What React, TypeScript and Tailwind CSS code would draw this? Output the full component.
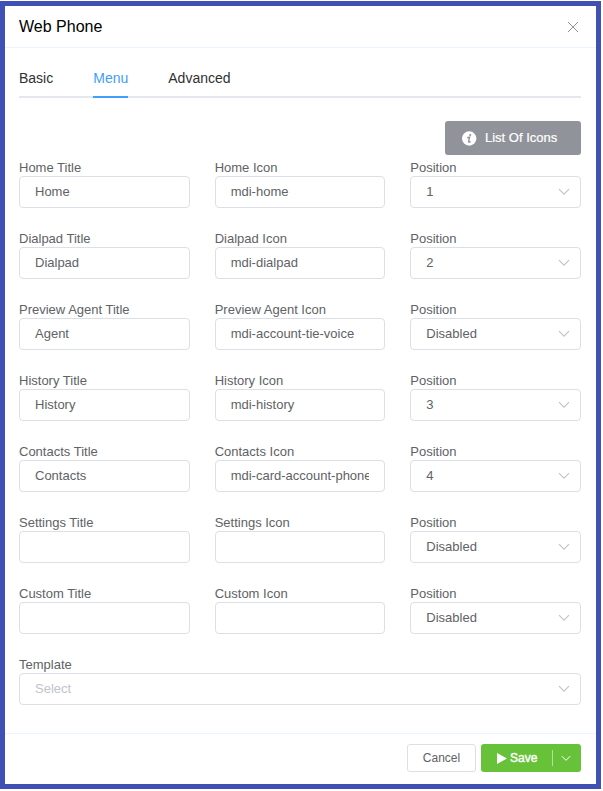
import React from "react";

const rows = [
  { name: "Home", title: "Home", icon: "mdi-home", position: "1" },
  { name: "Dialpad", title: "Dialpad", icon: "mdi-dialpad", position: "2" },
  { name: "Preview Agent", title: "Agent", icon: "mdi-account-tie-voice", position: "Disabled" },
  { name: "History", title: "History", icon: "mdi-history", position: "3" },
  { name: "Contacts", title: "Contacts", icon: "mdi-card-account-phone", position: "4" },
  { name: "Settings", title: "", icon: "", position: "Disabled" },
  { name: "Custom", title: "", icon: "", position: "Disabled" },
];

function Chevron({ className }: { className: string }) {
  return (
    <svg className={className} viewBox="0 0 12 8" fill="none" stroke="currentColor" strokeWidth="1.2">
      <path d="M1 1.2 6 6.2 11 1.2" />
    </svg>
  );
}

function Field({ label, value }: { label: string; value: string }) {
  return (
    <label className="block min-w-0">
      <span className="block h-[17px] leading-[17px] whitespace-nowrap">{label}</span>
      <input
        className="block h-8 w-full rounded border border-[#dcdfe6] bg-white px-[15px] pb-0.5 outline-none"
        defaultValue={value}
      />
    </label>
  );
}

function Select({ label, value, muted = false }: { label: string; value: string; muted?: boolean }) {
  return (
    <div className="min-w-0">
      <div className="h-[17px] leading-[17px]">{label}</div>
      <div className="flex h-8 items-center justify-between rounded border border-[#dcdfe6] pr-2.5 pl-[15px]">
        <span className={muted ? "text-[#c0c4cc]" : ""}>{value}</span>
        <Chevron className="h-2 w-3 text-[#c0c4cc]" />
      </div>
    </div>
  );
}

export default function App() {
  return (
    <div className="h-[791px] w-[603px] bg-white pt-px font-['Liberation_Sans',Arial,sans-serif] text-[13px] text-[#606266]">
      <div className="flex h-[788px] w-[601px] flex-col border-5 border-[#3f51b5] bg-white">
        <header className="flex h-[42px] shrink-0 items-center justify-between border-b border-[#ecf5ff] pr-[17px] pl-3.5">
          <h1 className="text-[16px] text-black">Web Phone</h1>
          <svg width="12" height="12" viewBox="0 0 12 12" stroke="#909399" strokeWidth="1">
            <path d="M1 1 11 11M11 1 1 11" />
          </svg>
        </header>

        <main className="flex h-[685px] shrink-0 flex-col pt-[17px] pr-[15px] pb-7 pl-3.5">
          <nav className="flex h-[33px] shrink-0 gap-10 border-b-2 border-[#e4e7ed] text-sm leading-[26px] text-[#303133]">
            <span>Basic</span>
            <span className="h-[33px] border-b-2 border-[#409eff] text-[#409eff]">Menu</span>
            <span>Advanced</span>
          </nav>

          <button className="mt-[23px] flex h-[34px] w-[136px] shrink-0 items-center gap-2 self-end rounded-[3px] bg-[#909399] pl-[17px] text-white">
            <svg width="15" height="15" viewBox="0 0 15 15">
              <circle cx="7.2" cy="7.5" r="7.2" fill="white" />
              <circle cx="8.2" cy="4" r="1.1" fill="#909399" />
              <path d="M5.2 6.6 7.6 6.2 6.6 10.4Q6.4 11.8 8.6 10.6" fill="none" stroke="#909399" strokeWidth="1.4" />
            </svg>
            <span className="[-webkit-text-stroke:0.2px_white]">List Of Icons</span>
          </button>

          <div className="mt-1 flex flex-col gap-[22px]">
            {rows.map((row) => (
              <div key={row.name} className="grid grid-cols-3 gap-[25px]">
                <Field label={row.name + " Title"} value={row.title} />
                <Field label={row.name + " Icon"} value={row.icon} />
                <Select label="Position" value={row.position} />
              </div>
            ))}
            <Select label="Template" value="Select" muted />
          </div>
        </main>

        <footer className="flex flex-1 items-start justify-end gap-[5px] border-t border-[#ecf5ff] pt-2.5 pr-[15px] text-xs">
          <button className="h-7 w-[69px] rounded-[3px] border border-[#dcdfe6]">Cancel</button>
          <div className="flex h-7 w-[100px] items-center rounded-[3px] bg-[#67c23a] text-white">
            <button className="flex h-7 w-[71px] items-center gap-[3px] pl-4">
              <svg width="10" height="11" viewBox="0 0 10 11" fill="white">
                <path d="M0 0 10 5.5 0 11Z" />
              </svg>
              <span className="[-webkit-text-stroke:0.4px_white]">Save</span>
            </button>
            <span className="h-4 w-px bg-white/50" />
            <button className="flex h-7 flex-1 items-center justify-center pr-0.5">
              <Chevron className="h-[7px] w-2.5 text-white" />
            </button>
          </div>
        </footer>
      </div>
    </div>
  );
}
